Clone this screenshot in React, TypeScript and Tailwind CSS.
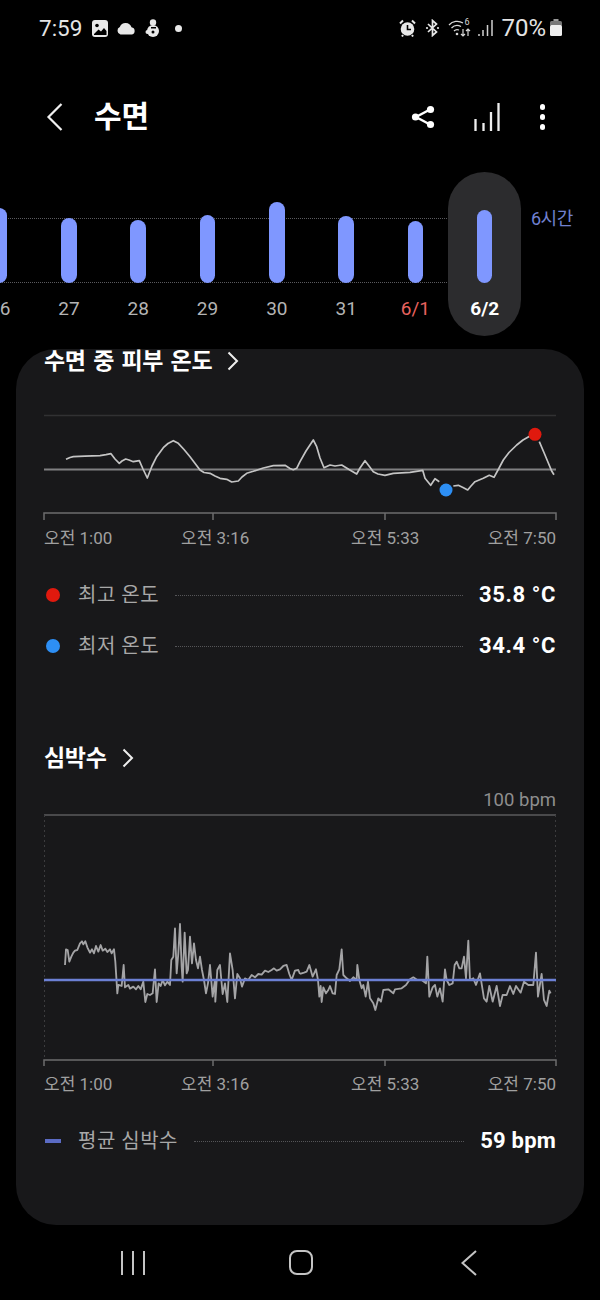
const FONT = '[font-family:Roboto,"Noto_Sans_CJK_KR",sans-serif]';

const bars = [
  { label: '26', top: 208 },
  { label: '27', top: 218 },
  { label: '28', top: 220 },
  { label: '29', top: 215 },
  { label: '30', top: 202 },
  { label: '31', top: 216 },
  { label: '6/1', top: 221, red: true },
  { label: '6/2', top: 210, active: true },
];

const tempLeft =
  '66,459.3 70,457.5 73.3,456.7 85,456.2 100,455.7 106,454.7 111,453.7 115,459 119.3,463.3 122,461 125.7,459 129,460 133.3,461.7 139.3,460.7 143,469 147.3,478 152,466 156.7,456.7 163.3,447.7 168,443.5 173.3,440.7 178.3,443.3 184,449.5 190,456.7 200,470 204,472.5 210,473.3 215,476 220,478.3 226.7,479.3 231.7,482 238.3,481 242,477 246.7,473.3 253.3,471.3 263.3,468 273.3,465.7 285,465.3 290,468.5 293.3,469.7 296.7,468.3 300,461.7 306,451 313.3,440 316.7,446.7 320,458 324,467.7 330,465 335,466 341.7,465 349,469.5 356.7,474 360,468 365,460.7 369,466 373.3,471.7 378,474 385,475.3 393.3,473.3 410,472.3 422.7,470.3 425,478.3 430.7,485.3 435,478.7 439.3,481.7';
const tempRight =
  '453.3,486 458.3,485.3 463,487.5 467.7,490 471,486 475,481.7 483.3,478.3 489.3,475.3 494,477.3 498,470 503.3,460 509,452.5 516.7,445 523,440 530,436';

const hrLeft =
  '105,195 108,148 113,150 118,185 124,170 130,158 135,152 142,150 150,130 156,124 160,133 166,124 172,142 180,158 186,148 192,160 198,138 205,155 212,135 218,152 226,146 232,156 240,148 245,160 252,148 256,185 262,280 265,255 275,258 281,195 285,262 295,255 300,266 310,260 318,268 325,258 332,268 340,245 346,306 352,282 360,285 368,280 375,208 380,306 386,250 392,258 398,240 405,256 412,245 420,255 424,180 430,170 435,85 440,220 445,160 450,72 455,200 458,245 464,98 470,220 474,210 480,110 486,190 492,130 498,180 504,205 510,170 516,210 522,240 528,280 534,250 540,195 548,290 555,240 556,305 562,210 570,195 578,282 585,250 592,306 600,160 608,210 615,295 622,222 630,235 636,260 645,235 655,240 665,225 675,232 685,222 695,224 705,212 715,216 725,210 732,205 740,212 750,208 760,198 770,195 778,222 785,240 795,212 805,210 810,222';
const hrRight =
  '0,222 12,218 20,215 28,195 38,230 48,208 54,240 58,290 62,258 65,306 70,262 78,280 85,270 90,258 98,280 105,282 110,225 118,208 125,148 130,225 140,235 150,243 160,232 170,240 172,195 178,240 185,265 190,255 197,290 204,245 210,295 220,310 226,330 235,295 243,305 250,270 265,268 280,280 285,268 305,265 318,255 330,238 340,232 352,240 365,240 378,250 382,170 388,290 398,262 405,255 412,290 420,265 428,305 435,208 440,240 448,255 458,250 464,195 470,185 478,205 485,205 492,170 498,235 505,122 510,240 520,235 528,255 540,220 552,295 560,305 568,258 578,305 590,258 600,318 608,285 620,285 630,258 640,282 648,258 662,278 672,245 685,255 700,255 708,158 714,290 725,222 732,300 740,318 748,272 752,280';

const StatusBar = () => (
  <div className="h-[56px] flex items-center pl-[39px] pr-[38px] text-[#e4e4e4]">
    <span className="text-[22.500px] leading-none w-[53px]">7:59</span>
    <svg width="16" height="17" viewBox="0 0 16 17" className="mr-[8px]">
      <rect width="16" height="17" rx="3" fill="#e8e8e8" />
      <circle cx="5" cy="5.5" r="1.8" fill="#000" />
      <path d="M2 14 L6.5 9.5 L9 11.5 L12 8 L14.5 11 V15 H2 Z" fill="#000" />
    </svg>
    <svg width="20" height="14" viewBox="0 0 20 14" className="mr-[9px]">
      <path d="M4.5 13.5 A4 4 0 0 1 3.8 6 A6.2 6.2 0 0 1 15.5 6.3 A3.7 3.7 0 0 1 16 13.5 Z" fill="#e8e8e8" />
    </svg>
    <svg width="15" height="20" viewBox="0 0 15 20" className="mr-[15px]">
      <circle cx="8" cy="4.5" r="3.2" fill="#e8e8e8" />
      <circle cx="8" cy="13" r="6" fill="#e8e8e8" />
      <circle cx="2.5" cy="14" r="2" fill="#e8e8e8" />
      <rect x="6" y="9" width="5" height="1.5" fill="#000" />
      <circle cx="8" cy="14" r="1.5" fill="#000" />
    </svg>
    <div className="w-[7px] h-[7px] rounded-full bg-[#e8e8e8]" />
    <div className="flex-1" />
    <svg width="17" height="18" viewBox="0 0 17 18" className="mr-[9px]">
      <circle cx="8.5" cy="10" r="6.8" fill="#e8e8e8" />
      <path d="M8.5 6 V10.5 H12" stroke="#000" strokeWidth="1.6" fill="none" />
      <path d="M1 4.5 L4 1.5 M16 4.5 L13 1.5 M4 16 L3 17.5 M13 16 L14 17.5" stroke="#e8e8e8" strokeWidth="2" />
    </svg>
    <svg width="15" height="18" viewBox="0 0 15 18" className="mr-[8px]">
      <path d="M3 5 L11.5 13 L7.5 16.5 V1.5 L11.5 5 L3 13" stroke="#e8e8e8" strokeWidth="1.7" fill="none" />
      <circle cx="2" cy="9" r="1.1" fill="#e8e8e8" />
      <circle cx="13" cy="9" r="1.1" fill="#e8e8e8" />
    </svg>
    <div className="relative w-[24px] h-[20px] mr-[6px]">
      <svg width="24" height="20" viewBox="0 0 24 20">
        <path d="M1 7 A11 11 0 0 1 15 5 M3.5 10 A8 8 0 0 1 13 8.5 M6 13 A4.5 4.5 0 0 1 11 12" stroke="#d8d8d8" strokeWidth="1.3" fill="none" />
        <circle cx="9" cy="16" r="1.3" fill="#d8d8d8" />
        <path d="M15 11 V18 M13 16 L15 18 L17 16 M20 18 V11 M18 13 L20 11 L22 13" stroke="#d8d8d8" strokeWidth="1.2" fill="none" />
      </svg>
      <span className="absolute right-[3px] top-0 text-[9px] leading-none text-[#d8d8d8]">6</span>
    </div>
    <svg width="15" height="18" viewBox="0 0 15 18" className="mr-[8px]">
      <path d="M1 17 V15 M5 17 V11 M9.500 17 V6 M14 17 V1" stroke="#cfcfcf" strokeWidth="1.500" />
    </svg>
    <span className="text-[24px] leading-none mr-[4px]">70%</span>
    <svg width="12" height="18" viewBox="0 0 12 18">
      <rect x="3.500" y="0" width="5" height="2" fill="#999" />
      <rect x="0" y="2" width="12" height="5" rx="1.500" fill="#777" />
      <rect x="0" y="6" width="12" height="11" rx="1.500" fill="#eee" />
    </svg>
  </div>
);

const Header = () => (
  <div className="h-[116px] pt-[6px] flex items-center pl-[46px] pr-[55px] text-white">
    <svg width="18" height="30" viewBox="0 0 18 30" className="mr-[30px]">
      <path d="M15.500 2 L2.500 15 L15.500 28" stroke="#f0f0f0" strokeWidth="2.200" fill="none" />
    </svg>
    <span className="text-[30px] leading-none font-bold tracking-[0px]">수면</span>
    <div className="flex-1" />
    <svg width="24" height="24" viewBox="0 0 24 24" className="mr-[39px]">
      <path d="M19 4.500 L5 12 L19 19.500" stroke="#fff" strokeWidth="2.400" fill="none" />
      <circle cx="19.500" cy="4.500" r="3.600" fill="#fff" />
      <circle cx="4.500" cy="12" r="3.600" fill="#fff" />
      <circle cx="19.500" cy="19.500" r="3.600" fill="#fff" />
    </svg>
    <svg width="26" height="30" viewBox="0 0 26 30" className="mr-[40px]">
      <path d="M1.500 29 V17 M9.500 29 V21 M17 29 V10 M24.500 29 V1" stroke="#eee" strokeWidth="2.300" />
    </svg>
    <div className="flex flex-col gap-[4.500px]">
      <div className="w-[5.500px] h-[5.500px] rounded-full bg-white" />
      <div className="w-[5.500px] h-[5.500px] rounded-full bg-white" />
      <div className="w-[5.500px] h-[5.500px] rounded-full bg-white" />
    </div>
  </div>
);

const SleepBars = () => (
  <div className="relative h-[164px] flex overflow-hidden">
    <div className="absolute left-0 top-[46px] w-[447px] border-t border-dotted border-[#5a5a5e]" />
    <div className="absolute left-0 top-[110px] w-[447px] border-t border-dotted border-[#5a5a5e]" />
    <div className="absolute left-[531px] top-[35px] text-[18px] leading-[24px] text-[#7080d0] tracking-[-0.5px]">6시간</div>
    <div className="flex -ml-[35px]">
      {bars.map((b) => (
        <div
          key={b.label}
          className={`relative flex flex-col items-center ${b.active ? 'w-[73px] -mx-[1.85px] bg-[#2c2c2e] rounded-full' : 'w-[69.3px]'}`}
        >
          <div className="h-[111px] flex items-end">
            <div className="w-[15.500px] rounded-full bg-[#7f97ff]" style={{ height: 283 - b.top }} />
          </div>
          <div
            className={`mt-[14px] h-[24px] text-[19px] leading-[24px] ${
              b.active ? 'text-white font-bold' : b.red ? 'text-[#e8625e]' : 'text-[#b4b4b4]'
            }`}
          >
            {b.label}
          </div>
        </div>
      ))}
    </div>
  </div>
);

const Chevron = () => (
  <svg width="12" height="20" viewBox="0 0 12 20">
    <path d="M1.500 1.500 L10 10 L1.500 18.500" stroke="#eee" strokeWidth="2" fill="none" />
  </svg>
);

const AxisLabels = () => (
  <div className="mt-[6px] h-[20px] flex text-[17px] leading-[20px] text-[#a0a0a0] whitespace-nowrap">
    <span className="w-[137px]">오전 1:00</span>
    <span className="w-[170px]">오전 3:16</span>
    <span className="flex-1">오전 5:33</span>
    <span>오전 7:50</span>
  </div>
);

const StatRow = ({ marker, label, value, className, valueClass = '' }: { marker: React.ReactNode; label: string; value: string; className: string; valueClass?: string }) => (
  <div className={`h-[28px] flex items-center ${className}`}>
    <div className="w-[34px] flex">{marker}</div>
    <span className="text-[20px] leading-none text-[#a8a8a8] tracking-[0.5px] whitespace-nowrap">{label}</span>
    <div className="flex-1 mx-[16px] border-t border-dotted border-[#555558]" />
    <span className={`text-[22px] leading-none font-bold text-white whitespace-nowrap ${valueClass}`}>{value}</span>
  </div>
);

export default function App() {
  return (
    <div className={`w-[600px] h-[1300px] bg-black overflow-hidden ${FONT}`}>
      <StatusBar />
      <Header />
      <SleepBars />

      <div className="mx-4 mt-[13px] h-[876px] bg-[#18181a] rounded-[40px] overflow-hidden px-[28px]">
        <div className="h-[24px] flex items-center gap-[15px] text-white">
          <span className="text-[23px] leading-none font-bold tracking-[-0.3px] [word-spacing:2px]">수면 중 피부 온도</span>
          <Chevron />
        </div>

        <svg width="512" height="112" viewBox="44 410 512 112" className="block mt-[37px] overflow-visible">
          <path d="M44 415.500 H556" stroke="#313133" strokeWidth="1.500" />
          <path d="M44 469.500 H556" stroke="#808082" strokeWidth="2" />
          <path d="M44 520 V513 H556 V520 M213 513 V520 M385 513 V520" stroke="#6c6c6e" strokeWidth="1.500" fill="none" />
          <polyline points={tempLeft} fill="none" stroke="#c4c4c4" strokeWidth="1.700" strokeLinejoin="round" />
          <polyline points={tempRight} fill="none" stroke="#c4c4c4" strokeWidth="1.700" strokeLinejoin="round" />
          <polyline points="539.300,441.700 545,455 551.700,471 554,474.700" fill="none" stroke="#c4c4c4" strokeWidth="1.700" />
          <circle cx="535" cy="434.300" r="6.500" fill="#e0190e" />
          <circle cx="446" cy="490" r="6.500" fill="#2d8ff5" />
        </svg>
        <AxisLabels />

        <StatRow
          className="mt-[33px]"
          marker={<div className="ml-[2px] w-[14px] h-[14px] rounded-full bg-[#e0190e]" />}
          label="최고 온도"
          value="35.8 °C"
          valueClass="tracking-[0.6px]"
        />
        <StatRow
          className="mt-[23px]"
          marker={<div className="ml-[2px] w-[14px] h-[14px] rounded-full bg-[#2d8ff5]" />}
          label="최저 온도"
          value="34.4 °C"
          valueClass="tracking-[0.6px]"
        />

        <div className="mt-[83px] h-[30px] flex items-center gap-[15px] text-white">
          <span className="text-[23px] leading-none font-bold tracking-[-0.3px]">심박수</span>
          <Chevron />
        </div>

        <div className="mt-[17px] h-[20px] text-right text-[18.500px] leading-[20px] text-[#8e8e8e]">100 bpm</div>

        <svg width="512" height="258" viewBox="44 810 512 258" className="block overflow-visible">
          <path d="M44 815 H556" stroke="#5a5a5c" strokeWidth="1.500" />
          <path d="M44.500 815 V1060 M555.500 815 V1060" stroke="#3c3c3e" strokeWidth="1" strokeDasharray="2 3" />
          <path d="M44 1066 V1060 H556 V1066 M213 1060 V1066 M385 1060 V1066" stroke="#6c6c6e" strokeWidth="1.500" fill="none" />
          <g transform="translate(30 900) scale(0.3333)">
            <polyline points={hrLeft} fill="none" stroke="#a4a4a6" strokeWidth="5.500" strokeLinejoin="round" />
          </g>
          <g transform="translate(300 900) scale(0.3333)">
            <polyline points={hrRight} fill="none" stroke="#a4a4a6" strokeWidth="5.500" strokeLinejoin="round" />
          </g>
          <path d="M44 980 H556" stroke="#6c80d4" strokeWidth="2.500" />
        </svg>
        <AxisLabels />

        <StatRow
          className="mt-[33px]"
          marker={<div className="ml-[1px] w-[16px] h-[4px] bg-[#5b6bc4]" />}
          label="평균 심박수"
          value="59 bpm"
          valueClass="tracking-[0.2px]"
        />
      </div>

      <div className="h-[75px] flex items-center pl-[121px]">
        <div className="flex gap-[9px] mr-[144px]">
          <div className="w-[2px] h-[24px] bg-[#c4c4c4]" />
          <div className="w-[2px] h-[24px] bg-[#c4c4c4]" />
          <div className="w-[2px] h-[24px] bg-[#c4c4c4]" />
        </div>
        <div className="w-[24px] h-[25px] rounded-[8px] border-2 border-[#c4c4c4] mr-[147px]" />
        <svg width="18" height="26" viewBox="0 0 18 26">
          <path d="M16 1 L2.500 13 L16 25" stroke="#c4c4c4" strokeWidth="2" fill="none" />
        </svg>
      </div>
    </div>
  );
}
